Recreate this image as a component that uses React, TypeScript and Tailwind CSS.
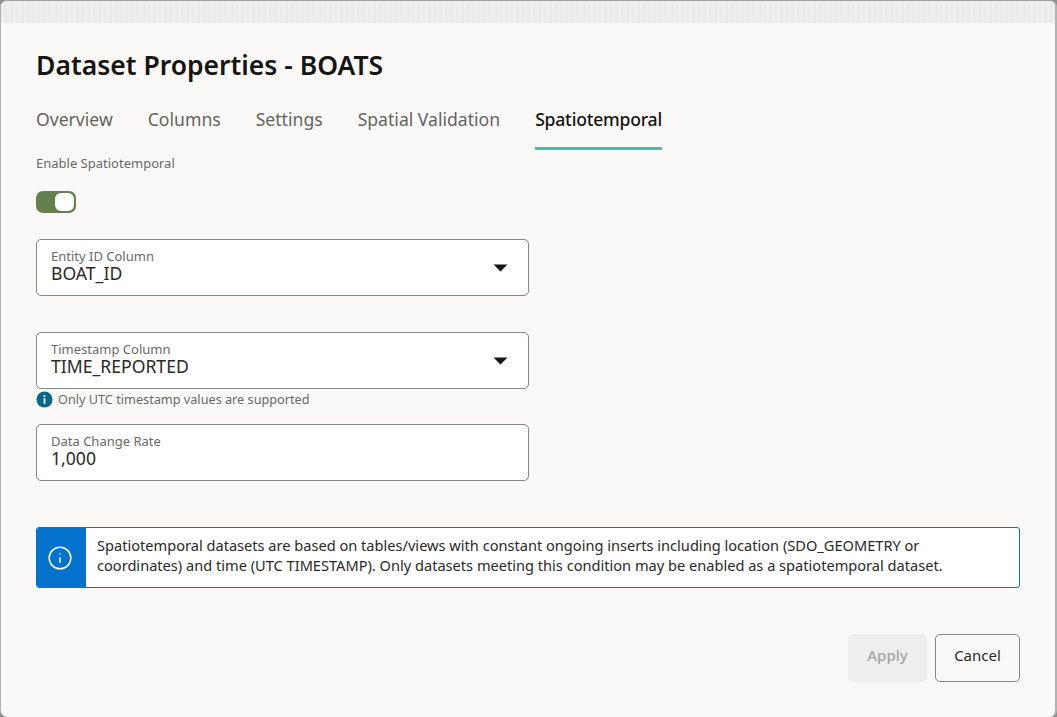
import { Info } from "lucide-react";

const TABS = ["Overview", "Columns", "Settings", "Spatial Validation", "Spatiotemporal"];

const Field = ({ label, value, select }: { label: string; value: string; select?: boolean }) => (
  <div className="relative h-[57px] w-[493px] rounded-[5px] border border-[#8a8785] bg-white pl-[14px] pt-[8px]">
    <div className="text-[13px] leading-[16px] text-[#6b6966]">{label}</div>
    <div className="text-[17.6px] leading-[18px] text-[#2b2926]">{value}</div>
    {select && (
      <svg className="absolute right-[20px] top-[24px]" width="15" height="8" viewBox="0 0 15 8">
        <path d="M0.5 0.5H14.5L7.5 7.5Z" fill="#161513" />
      </svg>
    )}
  </div>
);

export default function App() {
  return (
    <div className="h-[717px] w-[1057px] overflow-hidden bg-[#8f8f8f] font-['Noto_Sans','Open_Sans',sans-serif]">
      <div className="flex h-[717px] flex-col overflow-hidden rounded-[7px] border-l border-r-2 border-t border-[#b5b3b1] border-t-[#a3a1a0] bg-[#faf9f7]">
        {/* backdrop strip */}
        <div className="h-[22px] shrink-0 bg-[repeating-linear-gradient(90deg,#e7e6e5_0px,#f3f2f1_2px,#e9e8e7_5px,#f1f0ef_7px,#ebeae9_11px)]" />

        <div className="flex flex-1 flex-col px-[35px]">
          <h1 className="mt-[24px] text-[26.5px] font-semibold leading-[36px] text-[#161513]">Dataset Properties - BOATS</h1>

          <div className="mt-[17px] flex gap-[35px]">
            {TABS.map((tab, i) => (
              <div
                key={tab}
                className={
                  i === 4
                    ? "h-[50px] border-b-[3px] border-[#47bfa2] pt-[7px] text-[17.6px] font-medium leading-[24px] tracking-[-0.22px] text-[#161513]"
                    : "h-[50px] pt-[7px] text-[17.6px] leading-[24px] text-[#65635f]"
                }
              >
                {tab}
              </div>
            ))}
          </div>

          <div className="mt-[4px] text-[13px] leading-[18px] text-[#6b6966]">Enable Spatiotemporal</div>

          <div className="mt-[19px] flex h-[22px] w-[40px] items-center justify-end rounded-[7px] bg-[#65804f] pr-[2px]">
            <div className="h-[18px] w-[19px] rounded-[6px] bg-white" />
          </div>

          <div className="mt-[26px]">
            <Field label="Entity ID Column" value="BOAT_ID" select />
          </div>
          <div className="mt-[36px]">
            <Field label="Timestamp Column" value="TIME_REPORTED" select />
          </div>
          <div className="mt-[1px] flex h-[18px] items-center gap-[5px]">
            <svg width="17" height="17" viewBox="0 0 17 17">
              <circle cx="8.5" cy="8.5" r="8" fill="#04678c" />
              <circle cx="8.5" cy="5" r="1.1" fill="#fff" />
              <rect x="7.6" y="7.2" width="1.8" height="5.6" fill="#fff" />
            </svg>
            <span className="text-[12.7px] leading-[16px] text-[#6b6966]">Only UTC timestamp values are supported</span>
          </div>
          <div className="mt-[16px]">
            <Field label="Data Change Rate" value="1,000" />
          </div>

          <div className="mt-[46px] flex h-[61px] w-[984px] overflow-hidden rounded-[3px] border border-[#0572ce] bg-white">
            <div className="flex w-[49px] shrink-0 items-center justify-center bg-[#0572ce] pr-[3px]">
              <Info size={26} strokeWidth={1.4} color="#fff" />
            </div>
            <p className="pl-[11px] pt-[7px] text-[14.6px] leading-[20px] text-[#2b2926]">
              Spatiotemporal datasets are based on tables/views with constant ongoing inserts including location (SDO_GEOMETRY or
              <br />
              coordinates) and time (UTC TIMESTAMP). Only datasets meeting this condition may be enabled as a spatiotemporal dataset.
            </p>
          </div>

          <div className="mt-[46px] flex w-[984px] justify-end gap-[8px]">
            <button className="h-[48px] w-[79px] rounded-[5px] bg-[#efeeec] pb-[6px] text-[15px] font-medium text-[#a5a3a1]">Apply</button>
            <button className="h-[48px] w-[85px] rounded-[5px] border border-[#8a8785] pb-[6px] text-[15px] text-[#2b2926]">Cancel</button>
          </div>
        </div>
      </div>
    </div>
  );
}
